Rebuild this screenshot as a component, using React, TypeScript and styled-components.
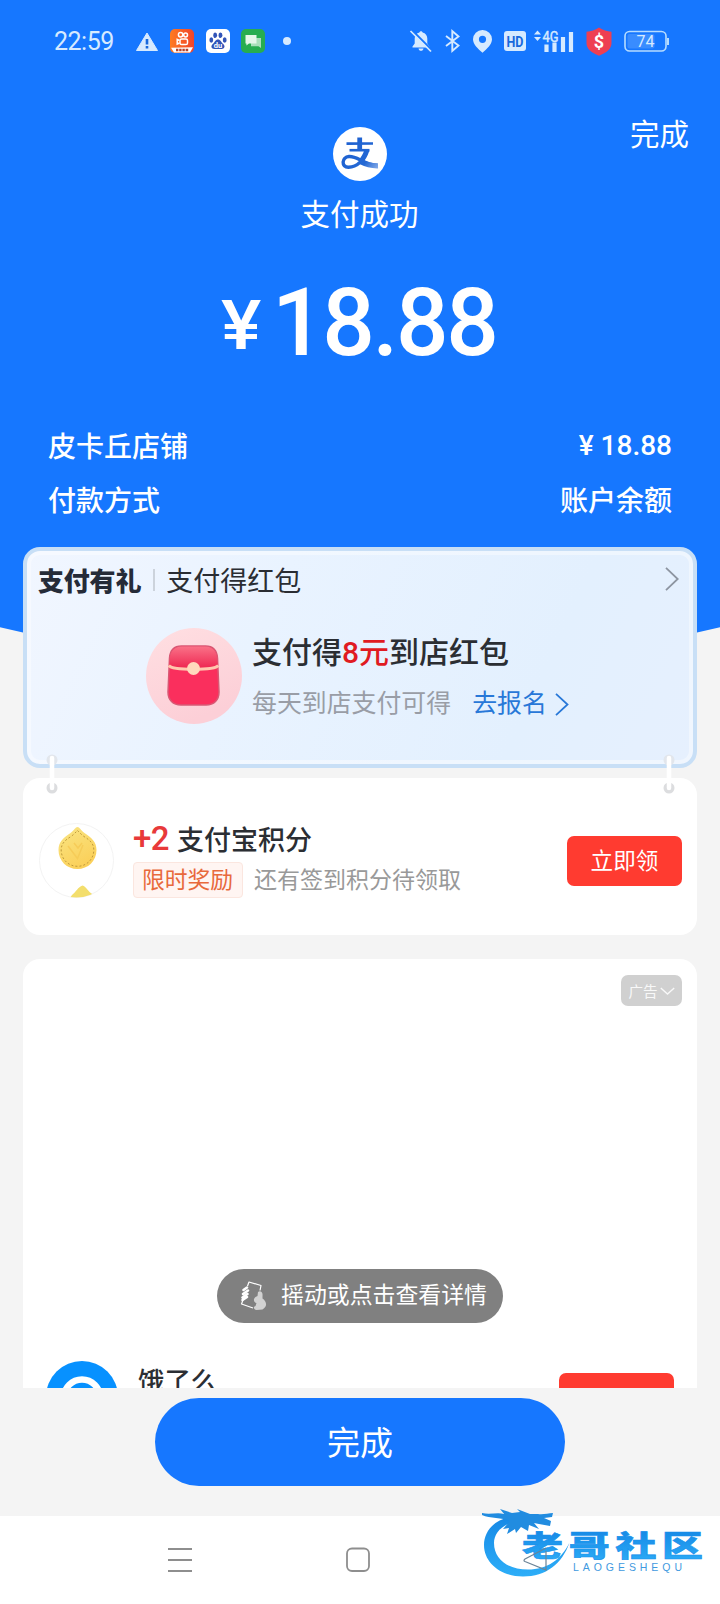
import React from "react";
import styled, { createGlobalStyle } from "styled-components";

const GlobalStyle = createGlobalStyle`
  * { box-sizing: border-box; }
  body {
    margin: 0;
    background: #f4f4f4;
    font-family: Roboto, "Noto Sans CJK SC", sans-serif;
    color: #2b2e33;
  }
`;

const Screen = styled.div`
  width: 720px;
  height: 1604px;
  display: flex;
  flex-direction: column;
  overflow: hidden;
  background: #f4f4f4;
`;

const Scroller = styled.main`
  height: 1388px;
  flex: none;
  overflow: hidden;
`;

/* ---------- hero ---------- */

const Hero = styled.header`
  height: 670px;
  margin-bottom: -123px;
  background: #1677ff;
  color: #fff;
  clip-path: ellipse(1034px 669px at 50% 0);
`;

const StatusBar = styled.div`
  height: 82px;
  padding: 0 51px 0 54px;
  display: flex;
  align-items: center;
  justify-content: space-between;
  color: #d6eaff;
`;

const StatusGroup = styled.div`
  display: flex;
  align-items: center;
`;

const Clock = styled.span`
  width: 82px;
  font-size: 25px;
  line-height: 30px;
  letter-spacing: -0.5px;
  padding-top: 2px;
`;

const StatusIcon = styled.svg<{ $w: number; $h: number; $ml?: number }>`
  width: ${(p) => p.$w}px;
  height: ${(p) => p.$h}px;
  margin-left: ${(p) => p.$ml ?? 0}px;
  flex: none;
  display: block;
  overflow: visible;
`;

const TopAction = styled.div`
  height: 45px;
  padding: 31px 31px 0 0;
  text-align: right;
  font-size: 29.5px;
  line-height: 45px;
`;

const Result = styled.section`
  display: flex;
  flex-direction: column;
  align-items: center;
`;

const Logo = styled.svg`
  width: 54px;
  height: 54px;
  display: block;
`;

const ResultTitle = styled.h1`
  margin: 12px 1px 0 0;
  font-size: 29.5px;
  line-height: 44px;
  font-weight: 400;
`;

const Amount = styled.div`
  margin-top: 33px;
  width: 283px;
  height: 106px;
  display: flex;
  align-items: flex-start;
  font-size: 95px;
  line-height: 106px;
  font-weight: 500;
  white-space: nowrap;
`;

const Yen = styled.span`
  width: 51px;
  margin-left: 2px;
  flex: none;
  font-size: 69px;
  line-height: 111px;
  transform: scaleX(1.1);
  transform-origin: left;
`;

const AmountDigits = styled.span`
  letter-spacing: -2.4px;
  transform: scaleX(0.975);
  transform-origin: left;
`;

const Details = styled.dl`
  margin: 42px 48px 0;
`;

const DetailRow = styled.div`
  height: 54px;
  display: flex;
  justify-content: space-between;
  align-items: center;
  font-size: 28px;
  font-weight: 500;
  dt, dd { margin: 0; }
`;

/* ---------- gift card ---------- */

const GiftCard = styled.section`
  position: relative;
  margin: 0 23px;
  height: 221px;
  border: 4px solid #c8dff6;
  border-radius: 17px;
  background: linear-gradient(115deg, #f1f6ff 0%, #e9f3ff 35%, #e3f0fe 75%, #e6f0fe 100%);
  box-shadow: inset 0 0 0 4px rgba(255, 255, 255, 0.4);
`;

const GiftHead = styled.div`
  height: 62px;
  padding: 0 14px 6px 11px;
  display: flex;
  align-items: center;
`;

const GiftBrand = styled.strong`
  font-size: 26px;
  font-weight: 900;
  letter-spacing: -0.2px;
  color: #252b38;
`;

const Divider = styled.i`
  width: 2px;
  height: 22px;
  margin: 2px 11px 0 12px;
  background: #ccd3dc;
`;

const GiftName = styled.span`
  flex: 1;
  font-size: 27px;
  color: #2a2d33;
`;

const Chevron = styled.svg<{ $w: number; $h: number; $stroke?: number }>`
  width: ${(p) => p.$w}px;
  height: ${(p) => p.$h}px;
  display: block;
  fill: none;
  stroke: currentColor;
  stroke-width: ${(p) => p.$stroke ?? 1.8};
`;

const GiftBody = styled.div`
  display: flex;
  padding: 14px 0 0 118px;
  gap: 10px;
`;

const Packet = styled.svg`
  width: 97px;
  height: 97px;
  flex: none;
`;

const GiftTitle = styled.h2`
  margin: 4px 0 0;
  font-size: 30px;
  line-height: 44px;
  font-weight: 500;
  white-space: nowrap;
  em { font-style: normal; color: #e01b22; }
`;

const GiftSub = styled.p`
  margin: 11px 0 0;
  display: flex;
  align-items: center;
  font-size: 24.9px;
  line-height: 36px;
  color: #999da6;
  white-space: nowrap;
`;

const GiftLink = styled.a`
  margin-left: 21px;
  display: flex;
  align-items: center;
  gap: 8px;
  color: #2878d8;
`;

const Link = styled.svg<{ $side: "left" | "right" }>`
  position: absolute;
  z-index: 1;
  top: 200px;
  ${(p) => (p.$side === "left" ? "left: 17px" : "right: 16px")};
  width: 16px;
  height: 46px;
`;

/* ---------- points card ---------- */

const PointsCard = styled.section`
  margin: 10px 23px 0;
  height: 157px;
  padding: 8px 15px 0 16px;
  display: flex;
  align-items: center;
  background: #fff;
  border-radius: 17px;
`;

const Coin = styled.svg`
  width: 75px;
  height: 75px;
  flex: none;
`;

const PointsInfo = styled.div`
  flex: 1;
  margin-left: 19px;
  white-space: nowrap;
`;

const PointsTitle = styled.div`
  height: 40px;
  display: flex;
  align-items: baseline;
  font-size: 27px;
  line-height: 32px;
  font-weight: 500;
  b { margin-right: 8px; font-size: 33px; font-weight: 500; color: #e8393a; letter-spacing: -0.5px; }
`;

const PointsSub = styled.div`
  display: flex;
  align-items: center;
  gap: 11px;
  font-size: 23px;
  line-height: 35px;
  color: #999;
`;

const Tag = styled.span`
  width: 110px;
  height: 36px;
  margin-top: -1px;
  text-indent: -1px;
  text-align: center;
  font-size: 22.8px;
  line-height: 36px;
  color: #e8693c;
  background: #fff5f2;
  border: 1px solid #fbe6df;
  border-radius: 4px;
`;

const RedButton = styled.button`
  width: 115px;
  height: 50px;
  padding: 1px 0 0;
  flex: none;
  border: 0;
  border-radius: 7px;
  background: #ff3b30;
  color: #fff;
  font: 400 22.6px/49px Roboto, "Noto Sans CJK SC", sans-serif;
`;

/* ---------- ad card ---------- */

const AdCard = styled.section`
  margin: 24px 23px 0;
  height: 520px;
  display: flex;
  flex-direction: column;
  align-items: center;
  background: #fff;
  border-radius: 17px;
`;

const AdTag = styled.span`
  align-self: flex-end;
  margin: 16px 15px 0 0;
  width: 61px;
  height: 31px;
  display: flex;
  align-items: center;
  justify-content: center;
  gap: 2px;
  border-radius: 7px;
  background: #d0d0d0;
  color: #f8f8f8;
  font-size: 14.6px;
`;

const ShakePill = styled.div`
  margin-top: 263px;
  width: 286px;
  height: 54px;
  padding-left: 22px;
  display: flex;
  align-items: center;
  gap: 12px;
  border-radius: 27px;
  background: #808080;
  color: #fff;
  font-size: 22.9px;
  line-height: 52px;
  white-space: nowrap;
`;

const Merchant = styled.div`
  align-self: stretch;
  margin-top: 38px;
  padding: 0 23px 0 23px;
  display: flex;
  align-items: flex-start;
  font-size: 26.4px;
  font-weight: 500;
`;

const MerchantLogo = styled.svg`
  width: 72px;
  height: 72px;
  flex: none;
`;

const MerchantName = styled.span`
  flex: 1;
  margin-left: 20px;
  line-height: 42px;
`;

const MerchantAction = styled(RedButton)`
  margin-top: 12px;
  padding-top: 5px;
`;

/* ---------- footer ---------- */

const Footer = styled.footer`
  height: 128px;
  flex: none;
  padding-top: 10px;
  display: flex;
  justify-content: center;
`;

const DoneButton = styled.button`
  width: 410px;
  height: 88px;
  padding: 3px 0 0;
  border: 0;
  border-radius: 44px;
  background: #1677ff;
  color: #fff;
  font: 400 33px/85px Roboto, "Noto Sans CJK SC", sans-serif;
`;

const NavBar = styled.nav`
  position: relative;
  height: 88px;
  flex: none;
  padding: 0 172px 0 168px;
  display: flex;
  align-items: center;
  justify-content: space-between;
  background: #fff;
`;

const NavIcon = styled.svg`
  width: 24px;
  height: 26px;
  fill: none;
  stroke: #8e8e8e;
  stroke-width: 1.8;
  display: block;
`;

const Watermark = styled.svg`
  position: absolute;
  left: 480px;
  top: -10px;
  width: 230px;
  height: 74px;
`;

const cjk = 'Roboto, "Noto Sans CJK SC", sans-serif';

function StatusIcons() {
  return (
    <StatusBar>
      <StatusGroup>
        <Clock>22:59</Clock>
        <StatusIcon $w={22} $h={19} viewBox="0 0 22 19">
          <path d="M11 1 21.5 18.5H.5Z" fill="#d6eaff" stroke="#d6eaff" strokeLinejoin="round" />
          <path d="M11 7v5.5M11 14v2.6" stroke="#1768dc" strokeWidth="2.6" />
        </StatusIcon>
        <StatusIcon $w={24} $h={24} $ml={12} viewBox="0 0 24 24">
          <defs>
            <linearGradient id="ks" x1="0" x2="1">
              <stop stopColor="#ff7b20" /><stop offset="1" stopColor="#f0442c" />
            </linearGradient>
          </defs>
          <rect width="24" height="24" rx="5" fill="url(#ks)" />
          <g fill="none" stroke="#fff" strokeWidth="1.5">
            <circle cx="10.6" cy="5.8" r="2.2" /><circle cx="15.6" cy="6" r="1.9" />
            <rect x="10" y="10" width="7.500" height="5.500" rx="1.600" /><path d="m9.500 11.500-2.300-1v4.500l2.300-1" />
          </g>
          <path d="M1 18.800 23 18.300l-3 5.200H4Z" fill="#fff" />
          <path d="M6 21h13" stroke="#b5442f" strokeWidth="2.600" strokeDasharray="2.400 .8" />
        </StatusIcon>
        <StatusIcon $w={24} $h={24} $ml={12} viewBox="0 0 24 24">
          <rect width="24" height="24" rx="5" fill="#fff" />
          <g fill="#3154b8">
            <ellipse cx="5.3" cy="11" rx="1.9" ry="2.7" /><ellipse cx="9.2" cy="6.3" rx="1.9" ry="2.8" />
            <ellipse cx="14.5" cy="6.3" rx="1.9" ry="2.8" /><ellipse cx="18.7" cy="11" rx="1.9" ry="2.7" />
            <path d="M12 10.5c2.6 0 3.2 2.7 5 4.3 3 2.700 1 5.200-1.200 5.200H8.200C5.800 20 4 17.500 7 14.800c1.800-1.600 2.400-4.300 5-4.300Z" />
          </g>
          <text x="12" y="18.800" textAnchor="middle" fontFamily={cjk} fontSize="7.500" fontWeight="700" fill="#fff">du</text>
        </StatusIcon>
        <StatusIcon $w={24} $h={24} $ml={11} viewBox="0 0 24 24">
          <rect width="24" height="24" rx="5" fill="#27ad50" />
          <path d="M10 9h10v10l-2.500-1.700H10Z" fill="#a9dfba" />
          <path d="M4.500 6h11v8.500H8l-2.600 2v-2h-.9Z" fill="#e5f7e9" />
        </StatusIcon>
        <StatusIcon $w={8} $h={8} $ml={18} viewBox="0 0 8 8"><circle cx="4" cy="4" r="4" fill="#d6eaff" /></StatusIcon>
      </StatusGroup>
      <StatusGroup>
        <StatusIcon $w={22} $h={22} viewBox="0 0 22 22">
          <path d="M11 1.200c.9 0 1.500.6 1.600 1.300 3 .8 4.700 3 4.700 6v5l2.200 3v1H2.500v-1l2.200-3v-5c0-3 1.700-5.200 4.700-6 .1-.7.700-1.300 1.600-1.300Z" fill="#d6eaff" />
          <path d="M8.500 18.500h5c-.3 1.500-1.200 2.300-2.500 2.300s-2.200-.8-2.500-2.300Z" fill="#d6eaff" />
          <path d="m2 .2 20.500 20.500" stroke="#1677ff" strokeWidth="2.200" /><path d="m.5 1 20.500 20.500" stroke="#d6eaff" strokeWidth="1.700" />
        </StatusIcon>
        <StatusIcon $w={15} $h={22} $ml={13} viewBox="0 0 15 22">
          <path d="m1 6 12.500 9.500L7.300 21V1l6.200 5.500L1 16" fill="none" stroke="#d6eaff" strokeWidth="1.900" />
        </StatusIcon>
        <StatusIcon $w={19} $h={23} $ml={13} viewBox="0 0 19 23">
          <path fillRule="evenodd" d="M9.500 0A9.300 9.300 0 0 1 19 9.300c0 5-5 9.500-9.500 13.500C5 18.800 0 14.300 0 9.300A9.300 9.300 0 0 1 9.500 0Zm0 5.700a3.600 3.600 0 1 0 0 7.200 3.600 3.600 0 0 0 0-7.200Z" fill="#d6eaff" />
        </StatusIcon>
        <StatusIcon $w={22} $h={20} $ml={12} viewBox="0 0 22 20">
          <rect width="22" height="20" rx="3" fill="#d6eaff" />
          <text x="11" y="15.500" textAnchor="middle" fontFamily={cjk} fontSize="15" fontWeight="700" fill="#1768dc" textLength="17" lengthAdjust="spacingAndGlyphs">HD</text>
        </StatusIcon>
        <StatusIcon $w={42} $h={23} $ml={7} viewBox="0 0 42 23">
          <path d="m1 4.500 3.500-4 3.500 4Zm0 2.500 3.500 4L8 7Z" fill="#d6eaff" />
          <path d="M13.500 14.500v7.500M21.500 12.500v9.500M30 7v15M38 2v20" stroke="#d6eaff" strokeWidth="4.200" />
          <text x="9.500" y="11.500" fontFamily={cjk} fontSize="14.500" fill="#d6eaff" stroke="#d6eaff" strokeWidth=".4" textLength="16" lengthAdjust="spacingAndGlyphs">4G</text>
        </StatusIcon>
        <StatusIcon $w={26} $h={29} $ml={11} viewBox="0 0 26 29">
          <path d="M13 .5c4 2.500 8 4 12.500 4.200V16c0 6-5 9.800-12.500 12.700C5.500 25.800.5 22 .5 16V4.700C5 4.500 9 3 13 .5Z" fill="#ee3f52" />
          <text x="13" y="20.800" textAnchor="middle" fontFamily={cjk} fontSize="18" fontWeight="700" fill="#fff">$</text>
        </StatusIcon>
        <StatusIcon $w={45} $h={22} $ml={12} viewBox="0 0 45 22">
          <rect x="1" y="1.500" width="41" height="19.500" rx="4.500" fill="none" stroke="#b6dcff" strokeWidth="1.600" />
          <rect x="3.500" y="4" width="27" height="14.500" rx="2" fill="#579eff" opacity=".55" />
          <path d="M44 8v7" stroke="#b6dcff" strokeWidth="2" />
          <text x="21.500" y="16.800" textAnchor="middle" fontFamily={cjk} fontSize="16" fill="#d6eaff">74</text>
        </StatusIcon>
      </StatusGroup>
    </StatusBar>
  );
}

function Connector({ side }: { side: "left" | "right" }) {
  return (
    <Link $side={side} viewBox="0 0 16 46">
      <circle cx="8" cy="9" r="5.500" fill="#e2e6ec" />
      <circle cx="8" cy="37" r="5.500" fill="#dcdddf" />
      <path d="M8 7v30" stroke="#fff" strokeWidth="4.500" strokeLinecap="round" />
    </Link>
  );
}

export default function App() {
  return (
    <Screen>
      <GlobalStyle />
      <Scroller>
        <Hero>
          <StatusIcons />
          <TopAction>完成</TopAction>
          <Result>
            <Logo viewBox="0 0 54 54">
              <defs>
                <linearGradient id="brand" gradientUnits="userSpaceOnUse" x1="10" y1="10" x2="46" y2="42">
                  <stop stopColor="#1c5fd0" /><stop offset=".7" stopColor="#2468d4" /><stop offset="1" stopColor="#8fb2ea" />
                </linearGradient>
              </defs>
              <circle cx="27" cy="27" r="27" fill="#fff" />
              <g fill="none" stroke="url(#brand)">
                <path d="M13.500 16.600 40 16.500" strokeWidth="2.600" />
                <path d="M26.700 10.500v12.500" strokeWidth="4.800" />
                <path d="M16.500 23.200H36.500" strokeWidth="2.600" />
                <path d="M34.200 22.500C31 32 25 40 15.500 40.300c-7.500.2-7-10.300.5-10.800 9-.5 14 8 28.500 8.800" strokeWidth="3.400" />
                <path d="M34 23c-1.500 4.500-3.500 8.500-6.500 11.500" strokeWidth="5" />
                <path d="M27 34.500c5 2.500 10 4.500 18 4.300" strokeWidth="5.200" />
              </g>
            </Logo>
            <ResultTitle>支付成功</ResultTitle>
            <Amount><Yen>¥</Yen><AmountDigits>18.88</AmountDigits></Amount>
          </Result>
          <Details>
            <DetailRow><dt>皮卡丘店铺</dt><dd>¥ 18.88</dd></DetailRow>
            <DetailRow><dt>付款方式</dt><dd>账户余额</dd></DetailRow>
          </Details>
        </Hero>

        <GiftCard>
          <GiftHead>
            <GiftBrand>支付有礼</GiftBrand>
            <Divider />
            <GiftName>支付得红包</GiftName>
            <Chevron $w={14} $h={24} viewBox="0 0 14 24" color="#8d95a1"><path d="m1 .8 11.700 11.200L1 23.200" /></Chevron>
          </GiftHead>
          <GiftBody>
            <Packet viewBox="0 0 97 97">
              <defs>
                <linearGradient id="halo" x1="0" y1="0" x2=".4" y2="1">
                  <stop stopColor="#ffdfe2" /><stop offset="1" stopColor="#fccfd7" />
                </linearGradient>
                <linearGradient id="flap" x1="0" y1="0" x2="0" y2="1">
                  <stop stopColor="#fa7187" /><stop offset="1" stopColor="#ed214d" />
                </linearGradient>
              </defs>
              <circle cx="49" cy="49" r="48" fill="url(#halo)" />
              <path d="M36.500 19h24c8 0 11.500 5 12 12l1.500 34c0 8-5 13-13 13H36c-8 0-13-5-13-13l1.500-34c.5-7 4-12 12-12Z" fill="#fa2f5d" stroke="#d85874" strokeWidth="1.500" />
              <path d="M24.200 39l.6-7.500c.7-8 5-12 12.200-12h23c7.200 0 11.500 4 12.200 12l.6 7.500q-24 8-48.600 0Z" fill="url(#flap)" />
              <path d="M23.800 38.500c4 5 45.500 5 49.500 0" fill="none" stroke="#ffc8ae" strokeWidth="3" />
              <circle cx="48.500" cy="41.500" r="6.500" fill="#ffd9bd" />
            </Packet>
            <div>
              <GiftTitle>支付得<em>8元</em>到店红包</GiftTitle>
              <GiftSub>
                每天到店支付可得
                <GiftLink>
                  去报名
                  <Chevron $w={14} $h={23} viewBox="0 0 14 23"><path d="m1 .8 11.500 10.700L1 22.200" /></Chevron>
                </GiftLink>
              </GiftSub>
            </div>
          </GiftBody>
          <Connector side="left" />
          <Connector side="right" />
        </GiftCard>

        <PointsCard>
          <Coin viewBox="0 0 75 75">
            <defs>
              <linearGradient id="gold" x1="0" y1="0" x2=".5" y2="1">
                <stop stopColor="#f9e583" /><stop offset="1" stopColor="#fbd05a" />
              </linearGradient>
              <clipPath id="coinClip"><circle cx="37.500" cy="37.500" r="37" /></clipPath>
            </defs>
            <circle cx="37.500" cy="37.500" r="37" fill="#fff" stroke="#f3f3f3" />
            <g clipPath="url(#coinClip)">
              <path d="M38.500 4c2 0 3.500 3.500 7 6 7 4.500 12 9 12 17 0 11-8.500 19-19 19s-19-8-19-19c0-8 5-12.500 12-17 3.500-2.500 5-6 7-6Z" fill="url(#gold)" />
              <path d="M38.500 7.500c2 2 4 4.200 6.500 6 6.500 4 9.800 7.500 9.800 13.500 0 9.300-7.300 16.300-16.300 16.300S22.200 36.300 22.200 27c0-6 3.300-9.500 9.800-13.500 2.500-1.800 4.500-4 6.500-6Z" fill="none" stroke="#b99337" strokeWidth=".9" strokeDasharray="2 2" />
              <path d="m29 23 9.500 12.500L44 22M35 20l4 5 4-5" fill="none" stroke="#f6cc58" strokeWidth="1.500" />
              <path d="m31 75 2-3c4-3 6-8 10.500-9.500 4 1 5 6 10.500 9l-1 4Z" fill="#f3de6c" />
            </g>
          </Coin>
          <PointsInfo>
            <PointsTitle><b>+2</b>支付宝积分</PointsTitle>
            <PointsSub><Tag>限时奖励</Tag>还有签到积分待领取</PointsSub>
          </PointsInfo>
          <RedButton>立即领</RedButton>
        </PointsCard>

        <AdCard>
          <AdTag>
            广告
            <Chevron $w={15} $h={8} $stroke={1.4} viewBox="0 0 15 8"><path d="m.8 1 6.700 6 6.700-6" /></Chevron>
          </AdTag>
          <ShakePill>
            <StatusIcon $w={30} $h={30} viewBox="0 0 30 30">
              <g fill="none" stroke="#fff" strokeWidth="1.200" strokeLinejoin="round">
                <path d="m8.500 5 1.500-4 12 3.500-1 5M4 19l-1.500 4L14 27" />
                <path d="M8 6.500 4.500 9M9 9.500 4 13m4.500 0L3.500 16.500M8 16l-4.500 3" strokeWidth="2.600" strokeLinecap="round" />
              </g>
              <path d="M19 11c2.500-2 5 .5 4.500 3.500v3c4.500 3 5 8.500 0 11l-6 .5c-3-.5-3.500-3-1-4l1-3c-3-1-3.500-4-1-6l2-1Z" fill="#d2d2d2" />
            </StatusIcon>
            摇动或点击查看详情
          </ShakePill>
          <Merchant>
            <MerchantLogo viewBox="0 0 72 72">
              <circle cx="36" cy="36" r="36" fill="#0791ff" />
              <circle cx="36" cy="36.500" r="18" fill="none" stroke="#fff" strokeWidth="6.500" />
            </MerchantLogo>
            <MerchantName>饿了么</MerchantName>
            <MerchantAction>去逛逛</MerchantAction>
          </Merchant>
        </AdCard>
      </Scroller>

      <Footer><DoneButton>完成</DoneButton></Footer>

      <NavBar>
        <NavIcon viewBox="0 0 24 26"><path d="M0 2h24M0 13h24M0 24h24" /></NavIcon>
        <NavIcon viewBox="0 0 24 26"><rect x="1" y="1.500" width="22" height="22.500" rx="5" /></NavIcon>
        <NavIcon viewBox="0 0 24 26" />
        <Watermark viewBox="0 0 230 74">
          <defs>
            <linearGradient id="water" x1="0" y1="0" x2="0" y2="1">
              <stop stopColor="#1688e5" /><stop offset="1" stopColor="#2daef8" />
            </linearGradient>
          </defs>
          <path d="M38 10C15 11 4 25 4 39c0 18 17 31.500 39 31.500 23 0 39-12.500 46.500-34C81 54 67 63.500 48 63.500c-20 0-34-10-34-26.500C14 27 22 18 38 15Z" fill="url(#water)" />
          <g fill="#218ce0">
            <path d="M2 7c8 2 15-1 22 1 5-1 9 0 12 2l-6 5C22 11 10 13 2 9Z" />
            <path d="m20 3 12 4 8-1-3-3 13 5h8c5 1 10-1 15-1l-1 4-8 1 7 3-1 5-11-2-5-1 5 6-10-4-1 6-7-4-5 6-1-4-8 5 2-6-6 1 7-8Z" />
          </g>
          <g transform="translate(42 0) scale(1.240 .88)">
            <text x="0" y="57.500" fontFamily={cjk} fontSize="33" fontWeight="900" fill="url(#water)" stroke="#1a91ec" strokeWidth=".7" textLength="146" lengthAdjust="spacing">老哥社区</text>
          </g>
          <text x="93" y="65" fontFamily='"Liberation Sans", sans-serif' fontSize="10.500" fill="#3f9ae0" textLength="109">LAOGESHEQU</text>
          <path d="M66 45v19L45 55.500q-2-1 0-2.500L66 42" fill="none" stroke="#6b8498" strokeWidth="1.200" />
        </Watermark>
      </NavBar>
    </Screen>
  );
}
